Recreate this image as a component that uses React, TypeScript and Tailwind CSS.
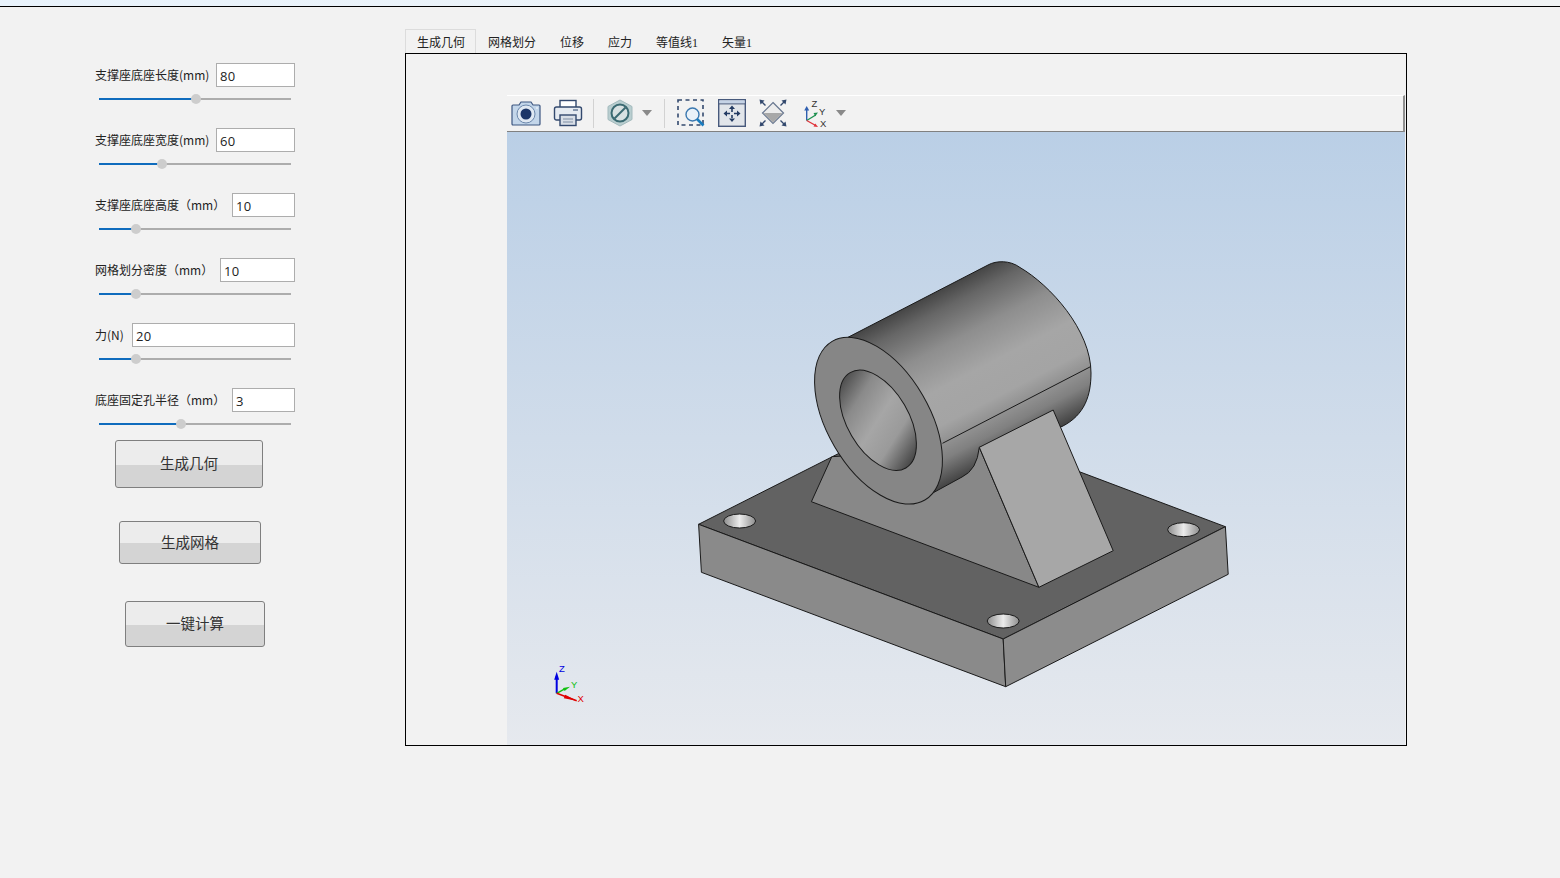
import React from 'react';

const CJK = "font-['Noto_Sans_CJK_SC','Microsoft_YaHei',sans-serif]";

interface ParamRowProps {
  label: string;
  value: string;
  inputWidth: number;
  knob: number;
}

const PARAMS: ParamRowProps[] = [
  { label: '支撑座底座长度(mm)', value: '80', inputWidth: 79, knob: 97 },
  { label: '支撑座底座宽度(mm)', value: '60', inputWidth: 79, knob: 63 },
  { label: '支撑座底座高度（mm）', value: '10', inputWidth: 63, knob: 37 },
  { label: '网格划分密度（mm）', value: '10', inputWidth: 75, knob: 37 },
  { label: '力(N)', value: '20', inputWidth: 163, knob: 37 },
  { label: '底座固定孔半径（mm）', value: '3', inputWidth: 63, knob: 82 },
];

const TABS = ['生成几何', '网格划分', '位移', '应力', '等值线1', '矢量1'];

const ParamRow: React.FC<ParamRowProps> = ({ label, value, inputWidth, knob }) => (
  <div className="h-[65px] w-[200px]">
    <div className="flex h-6 items-center justify-between">
      <span className="text-[12px] leading-none whitespace-nowrap text-[#222]">{label}</span>
      <input
        readOnly
        value={value}
        style={{ width: inputWidth }}
        className="h-6 border border-[#adadad] bg-white px-[3px] pt-[1px] font-['Open_Sans',sans-serif] text-[13px] tracking-[0.3px] text-[#222] outline-none"
      />
    </div>
    <div className="relative mt-[11px] ml-1 h-[2px] w-[192px] bg-[#adadad]">
      <div className="h-full bg-[#0f6cbd]" style={{ width: knob }} />
      <div className="absolute top-[-4px] h-[10px] w-[10px] rounded-full bg-[#cdcdcd]" style={{ left: knob - 5 }} />
    </div>
  </div>
);

const ActionButton: React.FC<{ label: string; className: string }> = ({ label, className }) => (
  <button
    className={`block rounded-[3px] border border-[#7f7f7f] bg-[linear-gradient(#ececec_0%,#ececec_52%,#d4d4d4_52%,#d4d4d4_100%)] pb-[2px] text-[14.5px] text-[#333] ${className}`}
  >
    {label}
  </button>
);

const CameraIcon = () => (
  <svg width="30" height="26" viewBox="0 0 30 26">
    <path d="M2 5h6l2-3h10l2 3h6a1 1 0 0 1 1 1v18a1 1 0 0 1-1 1H2a1 1 0 0 1-1-1V6a1 1 0 0 1 1-1z" fill="#c3d6ea" stroke="#3d5680" strokeWidth="1.2" />
    <circle cx="15" cy="14" r="9" fill="#dfe8f2" stroke="#6c88ac" strokeWidth="1" />
    <circle cx="15" cy="14" r="5.500" fill="#1c3668" />
    <circle cx="26" cy="8" r="0.800" fill="#fff" />
  </svg>
);

const PrinterIcon = () => (
  <svg width="30" height="28" viewBox="0 0 30 28">
    <rect x="7" y="1.500" width="16" height="9" fill="#fff" stroke="#33496e" strokeWidth="1.4" />
    <rect x="1.500" y="8" width="27" height="13" rx="2" fill="#e6ebf1" stroke="#33496e" strokeWidth="1.4" />
    <path d="M20 11h5" stroke="#5d7391" strokeWidth="1.4" />
    <rect x="7" y="16" width="16" height="10.500" fill="#d8dee6" stroke="#33496e" strokeWidth="1.4" />
    <path d="M10 20h10M10 23h10" stroke="#7f8ea3" strokeWidth="1.2" />
  </svg>
);

const NoDisplayIcon = () => (
  <svg width="26" height="28" viewBox="0 0 26 28">
    <path d="M13 1l12 6.500v13L13 27 1 20.500v-13z" fill="#b9ced0" stroke="#a3babd" strokeWidth="1" />
    <circle cx="13" cy="14" r="8.500" fill="#d8e1e2" stroke="#3b6a72" strokeWidth="2" />
    <path d="M7.500 19.500l11-11" stroke="#3b6a72" strokeWidth="2" />
  </svg>
);

const ZoomBoxIcon = () => (
  <svg width="28" height="28" viewBox="0 0 28 28">
    <rect x="1" y="1" width="25" height="25" fill="none" stroke="#33496e" strokeWidth="1.6" strokeDasharray="4 3.500" />
    <circle cx="15.500" cy="15.500" r="6.500" fill="#eaf2f9" stroke="#3a78b0" strokeWidth="1.4" />
    <path d="M20 20l6.500 6.500" stroke="#1a7dbf" strokeWidth="2.600" />
  </svg>
);

const FitAllIcon = () => (
  <svg width="28" height="28" viewBox="0 0 28 28">
    <rect x="0.700" y="0.700" width="26.600" height="26.600" fill="#e1e5ea" stroke="#47597c" strokeWidth="1.400" />
    <rect x="1.400" y="1.400" width="25.200" height="3" fill="#c5d3e6" />
    <path d="M1 4.900h26" stroke="#47597c" strokeWidth="1" />
    <path d="M14 10v3M14 16v3M9 14.500h3M16 14.500h3" stroke="#233b63" strokeWidth="1.600" />
    <path d="M14 6.500l-3 3.500h6zM14 23l-3-3.500h6zM5.500 14.500l3.500-3v6zM22.500 14.500l-3.500-3v6z" fill="#233b63" />
  </svg>
);

const IsoIcon = () => (
  <svg width="28" height="28" viewBox="0 0 28 28">
    <path d="M14 3.500l10.500 10.500L14 24.500 3.500 14z" fill="#ececec" stroke="#68778f" strokeWidth="1.200" />
    <path d="M4.500 14h19L14 23.500z" fill="#a8a8a8" />
    <path d="M0.500 0.500l5 1-4 4zM27.500 0.500l-5 1 4 4zM0.500 27.500l5-1-4-4zM27.500 27.500l-5-1 4-4z" fill="#33496e" />
    <path d="M3 3l3.500 3.500M25 3l-3.500 3.500M3 25l3.500-3.500M25 25l-3.500-3.500" stroke="#33496e" strokeWidth="1.400" />
  </svg>
);

const AxisIcon = () => (
  <svg width="24" height="29" viewBox="0 0 24 29">
    <path d="M2.700 21.500V10" stroke="#2f5fb0" strokeWidth="1.400" />
    <path d="M2.700 7L0.200 11.500h5z" fill="#2f5fb0" />
    <path d="M2.700 21.500l9-5.500" stroke="#1f9150" strokeWidth="1.400" />
    <path d="M14 13.500l-4.500.6 1.800 3.200z" fill="#1f9150" />
    <path d="M2.700 21.500l9 5" stroke="#e0343b" strokeWidth="1.400" />
    <path d="M14 28l-4.500-.4 1.800-3.200z" fill="#e0343b" />
    <text x="7.500" y="8" fontSize="9.500" fill="#333" fontFamily="Liberation Sans">Z</text>
    <text x="15" y="16" fontSize="9.500" fill="#333" fontFamily="Liberation Sans">Y</text>
    <text x="16" y="28" fontSize="9.500" fill="#333" fontFamily="Liberation Sans">X</text>
  </svg>
);

const Caret = ({ className }: { className: string }) => (
  <span className={`h-0 w-0 border-x-[5px] border-t-[6px] border-x-transparent border-t-[#8a8a8a] ${className}`} />
);
const ToolbarSep = ({ className }: { className: string }) => <span className={`h-[29px] w-px bg-[#d2d2d2] ${className}`} />;

const Bracket = () => {
  const cylinder =
    'M848 337.300 L988 265 C996 260.500 1010 260 1020 267.500 C1050 285 1091 330 1091 373 C1091 395 1085 415 1062 426.500 L1040 430 L979.300 447.300 Q977 470 962 477 L923.600 498 L860 420 Z';
  return (
    <svg viewBox="507 132 898 613" className="absolute inset-0 h-full w-full">
      <defs>
        <linearGradient id="cyl" gradientUnits="userSpaceOnUse" x1="836.300" y1="339.200" x2="920.700" y2="502.200">
          <stop offset="0" stopColor="#3f3f3f" />
          <stop offset="0.12" stopColor="#666666" />
          <stop offset="0.3" stopColor="#8e8e8e" />
          <stop offset="0.5" stopColor="#a6a6a6" />
          <stop offset="0.68" stopColor="#a4a4a4" />
          <stop offset="0.85" stopColor="#808080" />
          <stop offset="1" stopColor="#3c3c3c" />
        </linearGradient>
        <linearGradient id="bore" gradientUnits="userSpaceOnUse" x1="853" y1="371" x2="903" y2="469">
          <stop offset="0" stopColor="#454545" />
          <stop offset="0.25" stopColor="#8a8a8a" />
          <stop offset="0.5" stopColor="#a6a6a6" />
          <stop offset="0.72" stopColor="#9a9a9a" />
          <stop offset="1" stopColor="#3c3c3c" />
        </linearGradient>
        <linearGradient id="hole" x1="0" y1="0" x2="1" y2="0">
          <stop offset="0" stopColor="#8d8d8d" />
          <stop offset="0.5" stopColor="#ececec" />
          <stop offset="1" stopColor="#8d8d8d" />
        </linearGradient>
      </defs>
      <g stroke="#1a1a1a" strokeWidth="1" strokeLinejoin="round">
        {/* base plate */}
        <path d="M698.600 524.300 L920.800 412 L1225.400 526.700 L1003.200 639 Z" fill="#626262" />
        <path d="M698.600 524.300 L1003.200 639 L1005.700 686.700 L701.400 572.300 Z" fill="#8a8a8a" />
        <path d="M1003.200 639 L1225.400 526.700 L1228.200 574.300 L1005.700 686.700 Z" fill="#8c8c8c" />
        <ellipse cx="739.600" cy="521" rx="16" ry="7" fill="url(#hole)" />
        <ellipse cx="1183.600" cy="529.700" rx="16" ry="7" fill="url(#hole)" />
        <ellipse cx="1003.200" cy="621" rx="16" ry="7" fill="url(#hole)" />
        {/* support */}
        <path d="M811.400 501.700 L1038.900 587.300 L979.300 447.300 L831.800 456.700 Z" fill="#888888" />
        {/* cylinder */}
        <path d={cylinder} fill="url(#cyl)" />
        <path d="M942.500 443.300 L1090.500 366.700" fill="none" />
        <path d="M979.300 447.300 L1053.200 410 L1113.200 550.700 L1038.900 587.300 Z" fill="#a7a7a7" />
        <ellipse cx="878.500" cy="420.700" rx="51" ry="91.900" transform="rotate(-30.300 878.500 420.700)" fill="#868686" />
        <ellipse cx="878" cy="420.300" rx="30.600" ry="55.200" transform="rotate(-30.300 878 420.300)" fill="url(#bore)" />
      </g>
    </svg>
  );
};

const Triad = () => (
  <svg width="44" height="46" viewBox="0 0 44 46" className="absolute left-[44px] top-[530px]">
    <path d="M5.700 31.300V14" stroke="#0000e0" strokeWidth="2" />
    <path d="M5.700 9.700l-2.500 8h5z" fill="#0000e0" />
    <path d="M5.700 31.300l8-4.500" stroke="#10c010" strokeWidth="1.500" />
    <path d="M19 24.700l-7 1.200 1.600 3.200z" fill="#10c010" />
    <path d="M5.700 31.300l20 7.400" stroke="#e00000" strokeWidth="1.500" />
    <path d="M25.700 38.700l-11.500-6-1.400 3.600z" fill="#e00000" />
    <text x="8" y="9.500" fontSize="9.500" fill="#0000e0" fontFamily="Liberation Sans">Z</text>
    <text x="20" y="26" fontSize="9.500" fill="#10c010" fontFamily="Liberation Sans">Y</text>
    <text x="26.500" y="39.500" fontSize="9.500" fill="#e00000" fontFamily="Liberation Sans">X</text>
  </svg>
);

export default function App() {
  return (
    <div className={`flex h-[878px] w-[1560px] flex-col overflow-hidden bg-[#f2f2f2] ${CJK}`}>
      <div className="h-[7px] shrink-0 border-b border-black bg-[linear-gradient(to_right,#e9f3fc,#f1f4f5)]" />
      <div className="flex flex-1">
        {/* parameters */}
        <div className="w-[405px] shrink-0 pt-[56px] pl-[95px]">
          {PARAMS.map(p => (
            <ParamRow key={p.label} {...p} />
          ))}
          <ActionButton label="生成几何" className="-mt-[13px] ml-5 h-12 w-[148px]" />
          <ActionButton label="生成网格" className="mt-[33px] ml-6 h-[43px] w-[142px]" />
          <ActionButton label="一键计算" className="mt-[37px] ml-[30px] h-[46px] w-[140px]" />
        </div>

        {/* tabs + viewer */}
        <div className="w-[1002px] shrink-0 pt-[22px]">
          <div className="flex h-6 items-end font-['Liberation_Serif','Noto_Sans_CJK_SC',serif] text-[12px] text-[#222]">
            {TABS.map((tab, i) => (
              <span
                key={tab}
                className={
                  i === 0
                    ? 'flex h-6 items-center border-x border-t border-[#dcdcdc] pt-[2px] pr-[10px] pl-[11px]'
                    : 'flex h-6 items-center px-3 pt-[3px]'
                }
              >
                {tab}
              </span>
            ))}
          </div>
          <div className="h-[693px] border border-black pt-[41px] pr-[1px] pl-[101px]">
            <div className="flex h-[37px] items-center border-t border-r-2 border-b border-t-white border-r-[#909090] border-b-[#808080] bg-[#f2f2f2] pb-[1px]">
              <span className="ml-[4px] flex"><CameraIcon /></span>
              <span className="ml-[12px] flex"><PrinterIcon /></span>
              <ToolbarSep className="ml-[10px]" />
              <span className="ml-[13px] flex"><NoDisplayIcon /></span>
              <Caret className="ml-[9px]" />
              <ToolbarSep className="ml-[12px]" />
              <span className="ml-[12px] flex"><ZoomBoxIcon /></span>
              <span className="ml-[13px] flex"><FitAllIcon /></span>
              <span className="ml-[13px] flex"><IsoIcon /></span>
              <span className="ml-[17px] flex"><AxisIcon /></span>
              <Caret className="ml-[8px]" />
            </div>
            <div className="relative h-[613px] bg-[linear-gradient(#bacfe6,#e6e9ee)]">
              <Bracket />
              <Triad />
            </div>
          </div>
        </div>
      </div>
    </div>
  );
}
